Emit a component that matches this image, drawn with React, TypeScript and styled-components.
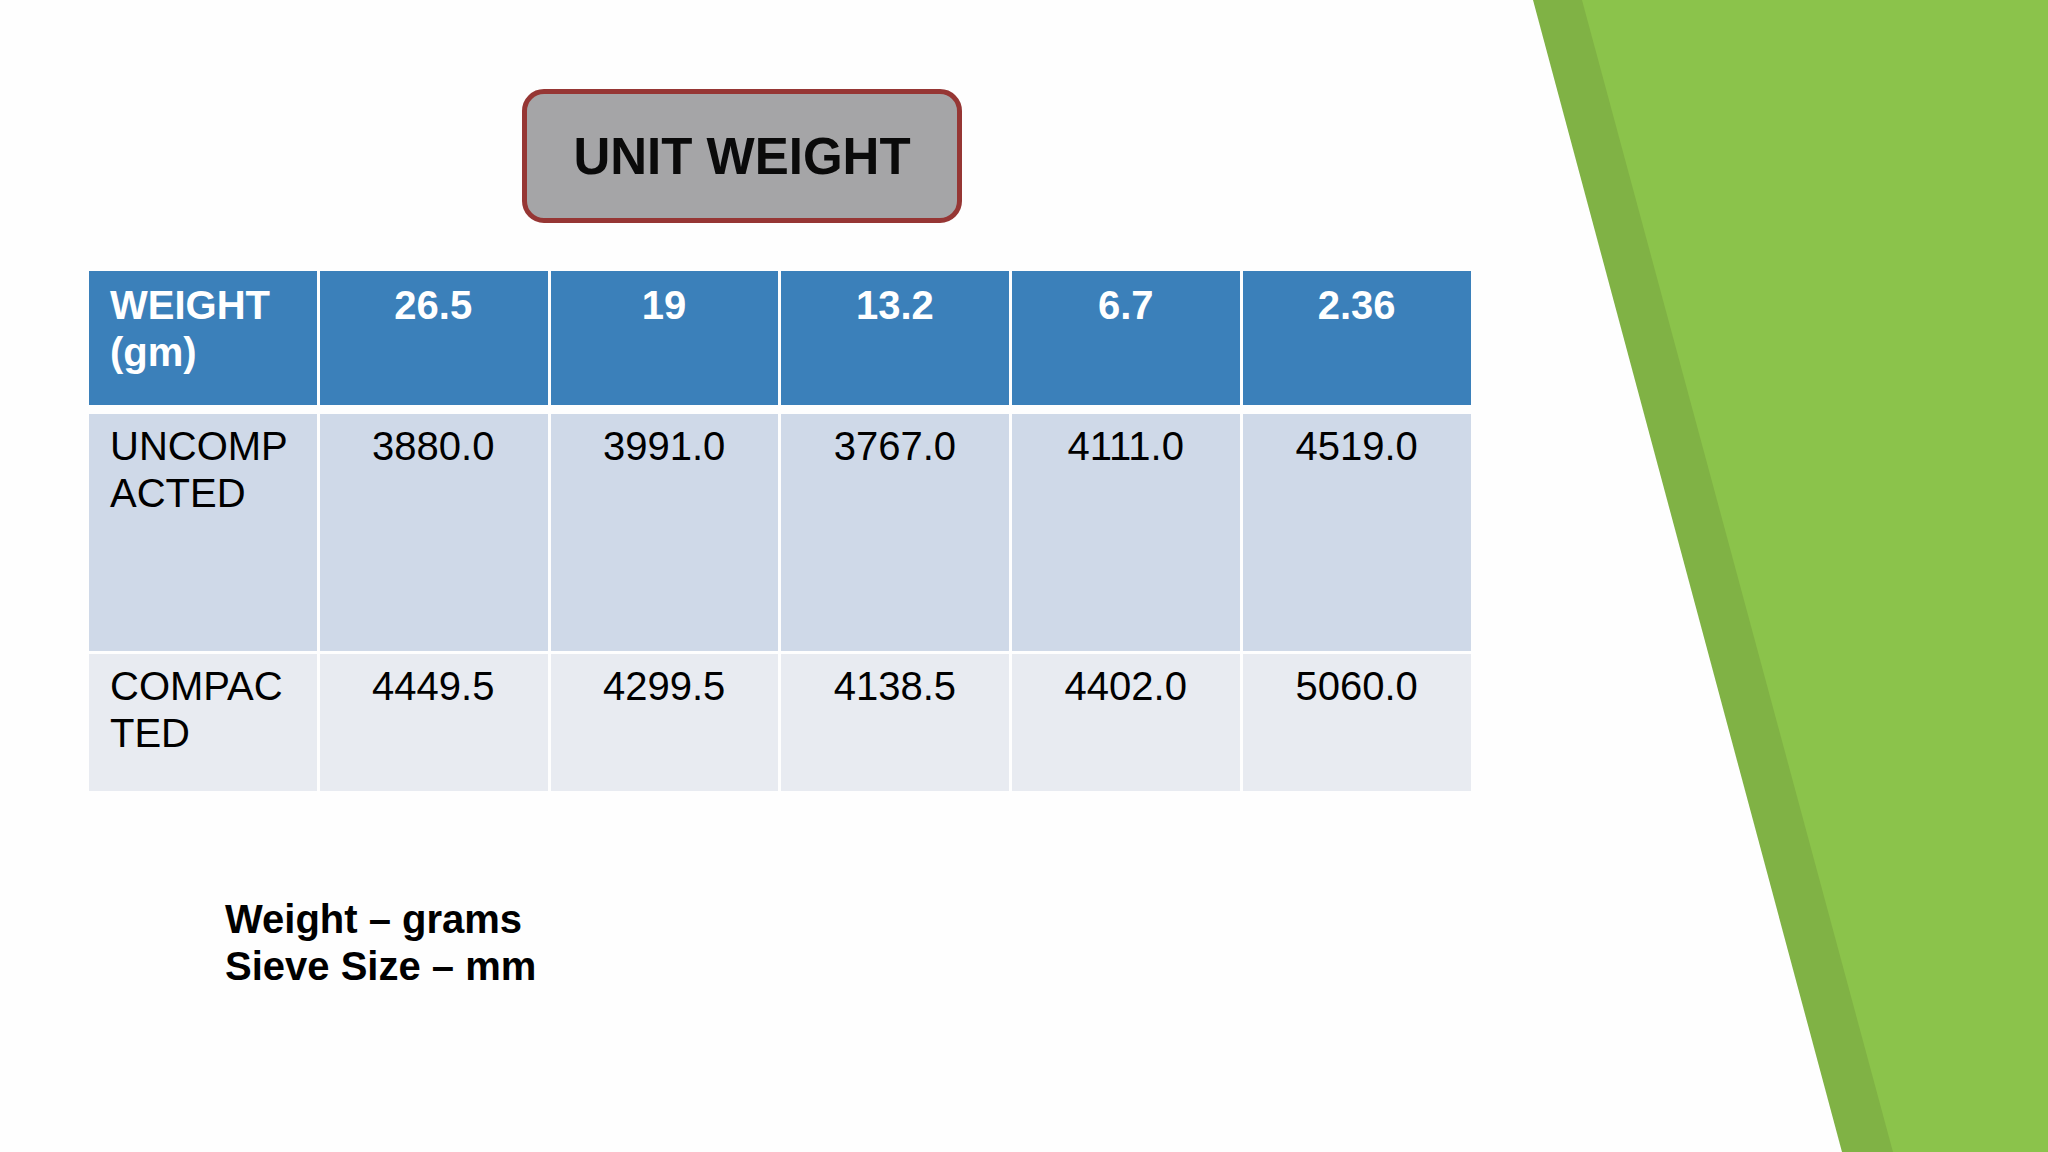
import React from "react";
import styled, { createGlobalStyle } from "styled-components";

const GlobalStyle = createGlobalStyle`
  body {
    margin: 0;
    background: #ffffff;
    font-family: "Liberation Sans", Arial, sans-serif;
  }
`;

const Slide = styled.div`
  width: 2048px;
  height: 1152px;
  display: flex;
  overflow: hidden;
  background: #fefefe;
`;

const Content = styled.main`
  flex: 1;
  display: flex;
  flex-direction: column;
  align-items: flex-start;
  padding: 89px 0 0 89px;
`;

const TitleBox = styled.div`
  box-sizing: border-box;
  width: 440px;
  height: 134px;
  margin-left: 433px;
  display: flex;
  align-items: center;
  justify-content: center;
  background: #a5a5a7;
  border: 5px solid #963634;
  border-radius: 22px;
  font-size: 51px;
  font-weight: 700;
  color: #0a0a0a;
`;

const Table = styled.div`
  margin-top: 48px;
  width: 1382px;
  display: flex;
  flex-direction: column;
  gap: 3px;
`;

const Row = styled.div<{ $height: number; $bg: string; $head?: boolean }>`
  display: grid;
  grid-template-columns: repeat(6, 1fr);
  column-gap: 3px;
  height: ${(p) => p.$height}px;
  margin-bottom: ${(p) => (p.$head ? 6 : 0)}px;

  & > div {
    background: ${(p) => p.$bg};
    color: ${(p) => (p.$head ? "#ffffff" : "#000000")};
    font-weight: ${(p) => (p.$head ? 700 : 400)};
    padding-top: ${(p) => (p.$head ? 11 : 9)}px;
  }
`;

const Cell = styled.div<{ $label?: boolean }>`
  box-sizing: border-box;
  padding: 0 22px 0 21px;
  font-size: 40px;
  line-height: 47px;
  text-align: ${(p) => (p.$label ? "left" : "center")};
`;

const Notes = styled.div`
  margin: 105px 0 0 136px;
  font-size: 40px;
  font-weight: 700;
  line-height: 47px;
  color: #000000;
`;

const Decoration = styled.svg`
  flex: 0 0 515px;
  height: 1152px;
  display: block;
`;

interface RowData {
  label: string[];
  values: string[];
  height: number;
  bg: string;
}

const sizes = ["26.5", "19", "13.2", "6.7", "2.36"];

const rows: RowData[] = [
  {
    label: ["UNCOMP", "ACTED"],
    values: ["3880.0", "3991.0", "3767.0", "4111.0", "4519.0"],
    height: 237,
    bg: "#cfd9e8",
  },
  {
    label: ["COMPAC", "TED"],
    values: ["4449.5", "4299.5", "4138.5", "4402.0", "5060.0"],
    height: 137,
    bg: "#e8ebf1",
  },
];

function App() {
  return (
    <>
      <GlobalStyle />
      <Slide>
        <Content>
          <TitleBox>UNIT WEIGHT</TitleBox>

          <Table>
            <Row $height={134} $bg="#3b80ba" $head>
              <Cell $label>
                WEIGHT
                <br />
                (gm)
              </Cell>
              {sizes.map((s) => (
                <Cell key={s}>{s}</Cell>
              ))}
            </Row>
            {rows.map((row) => (
              <Row key={row.label.join("")} $height={row.height} $bg={row.bg}>
                <Cell $label>
                  {row.label[0]}
                  <br />
                  {row.label[1]}
                </Cell>
                {row.values.map((v, i) => (
                  <Cell key={i}>{v}</Cell>
                ))}
              </Row>
            ))}
          </Table>

          <Notes>
            Weight – grams
            <br />
            Sieve Size – mm
          </Notes>
        </Content>

        <Decoration viewBox="0 0 515 1152" preserveAspectRatio="none">
          <polygon points="0,0 515,0 515,1152 309,1152" fill="#80b245" />
          <polygon points="49,0 515,0 515,1152 360,1152" fill="#8bc34b" />
        </Decoration>
      </Slide>
    </>
  );
}

export default App;
